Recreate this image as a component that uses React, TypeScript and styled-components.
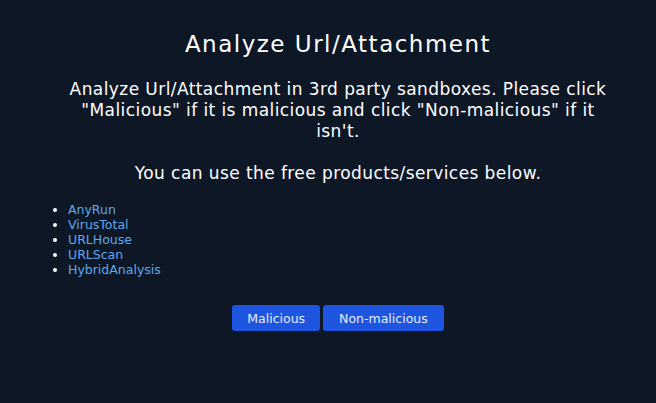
import styled, { createGlobalStyle } from 'styled-components';

const GlobalStyle = createGlobalStyle`
    html, body {
        margin: 0;
        padding: 0;
        background: #0e1726;
    }
    body {
        font-family: 'DejaVu Sans', 'Open Sans', sans-serif;
        color: #fff;
    }
`;

const Wrapper = styled.div`
    width: 656px;
    height: 403px;
    box-sizing: border-box;
    padding: 28px 40px 0 60px;
    background: #0e1726;
`;

const Title = styled.h1`
    margin: 0 0 19px;
    text-align: center;
    font-size: 23px;
    font-weight: 400;
    line-height: 32px;
    letter-spacing: 1.5px;
`;

const Description = styled.p`
    margin: 0 auto;
    max-width: 542px;
    text-align: center;
    font-size: 17px;
    line-height: 21px;
    letter-spacing: 0.42px;
`;

const Hint = styled(Description)`
    margin-top: 21px;
`;

const ServiceList = styled.ul`
    margin: 18px 0 0 -12px;
    padding-left: 20px;
    font-size: 12.5px;
    line-height: 15px;
    color: #fff;
`;

const ServiceItem = styled.li`
    color: #fff;
`;

const ServiceLink = styled.a`
    color: #60a8ec;
    text-decoration: none;
`;

const Actions = styled.div`
    display: flex;
    justify-content: center;
    gap: 3px;
    margin-top: 28px;
`;

const Button = styled.button<{ $pad?: number }>`
    height: 26px;
    padding: 0 ${(p) => p.$pad ?? 16}px;
    border: none;
    border-radius: 3px;
    background: #1d55e0;
    color: #e6edff;
    font-family: inherit;
    font-size: 12.5px;
    cursor: pointer;
`;

const services = ['AnyRun', 'VirusTotal', 'URLHouse', 'URLScan', 'HybridAnalysis'];

const App = () => (
    <>
        <GlobalStyle />
        <Wrapper>
            <Title>Analyze Url/Attachment</Title>
            <Description>
                Analyze Url/Attachment in 3rd party sandboxes. Please click "Malicious" if it is
                malicious and click "Non-malicious" if it isn't.
            </Description>
            <Hint>You can use the free products/services below.</Hint>
            <ServiceList>
                {services.map((name) => (
                    <ServiceItem key={name}>
                        <ServiceLink href="#">{name}</ServiceLink>
                    </ServiceItem>
                ))}
            </ServiceList>
            <Actions>
                <Button $pad={15}>Malicious</Button>
                <Button>Non-malicious</Button>
            </Actions>
        </Wrapper>
    </>
);

export default App;
